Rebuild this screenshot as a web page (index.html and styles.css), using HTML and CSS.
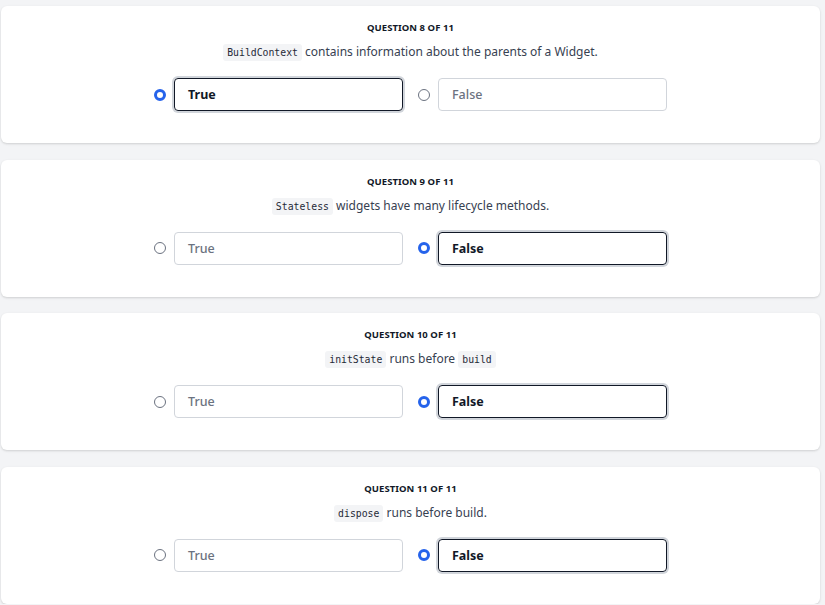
FILE: index.html
```html
<!DOCTYPE html>
<html>
<head>
<meta charset="utf-8">
<link rel="stylesheet" href="styles.css">
</head>
<body>
<main class="list">
  <section class="card">
    <div class="title">QUESTION 8 OF 11</div>
    <div class="question"><code>BuildContext</code> contains information about the parents of a Widget.</div>
    <div class="options">
      <label class="option selected"><span class="radio"></span><span class="box">True</span></label>
      <label class="option"><span class="radio"></span><span class="box">False</span></label>
    </div>
  </section>
  <section class="card">
    <div class="title">QUESTION 9 OF 11</div>
    <div class="question"><code>Stateless</code> widgets have many lifecycle methods.</div>
    <div class="options">
      <label class="option"><span class="radio"></span><span class="box">True</span></label>
      <label class="option selected"><span class="radio"></span><span class="box">False</span></label>
    </div>
  </section>
  <section class="card">
    <div class="title">QUESTION 10 OF 11</div>
    <div class="question"><code>initState</code> runs before <code>build</code></div>
    <div class="options">
      <label class="option"><span class="radio"></span><span class="box">True</span></label>
      <label class="option selected"><span class="radio"></span><span class="box">False</span></label>
    </div>
  </section>
  <section class="card">
    <div class="title">QUESTION 11 OF 11</div>
    <div class="question"><code>dispose</code> runs before build.</div>
    <div class="options">
      <label class="option"><span class="radio"></span><span class="box">True</span></label>
      <label class="option selected"><span class="radio"></span><span class="box">False</span></label>
    </div>
  </section>
</main>
</body>
</html>
```
FILE: styles.css
```css
html, body {
  margin: 0;
  padding: 0;
  background: #f3f4f6;
}
body {
  font-family: "Noto Sans", "Open Sans", sans-serif;
  color: #1f2937;
}
.list {
  display: flex;
  flex-direction: column;
  gap: 16.5px;
  padding: 6px 5px 0 1px;
}
.card {
  background: #ffffff;
  border-radius: 6px;
  box-shadow: 0 1px 3px rgba(0,0,0,0.10), 0 1px 2px rgba(0,0,0,0.06);
  height: 137px;
  box-sizing: border-box;
  padding-top: 16px;
  display: flex;
  flex-direction: column;
  align-items: center;
}
.title {
  font-size: 9.5px;
  font-weight: 700;
  line-height: 12px;
  color: #111827;
  letter-spacing: 0.05px;
}
.question {
  margin-top: 7px;
  font-size: 12px;
  line-height: 22px;
  color: #374151;
}
code {
  font-family: "DejaVu Sans Mono", "Liberation Mono", monospace;
  font-size: 9.8px;
  background: #f3f4f6;
  color: #1f2937;
  border-radius: 3px;
  padding: 3px 4px;
  letter-spacing: 0;
}
.options {
  margin-top: 14px;
  display: flex;
  gap: 15px;
}
.option {
  display: flex;
  align-items: center;
  gap: 8px;
}
.radio {
  width: 12px;
  height: 12px;
  box-sizing: border-box;
  border-radius: 50%;
  border: 1px solid #6b7280;
  background: #fff;
}
.box {
  width: 229px;
  height: 33px;
  box-sizing: border-box;
  border: 1px solid #d1d5db;
  border-radius: 4px;
  display: flex;
  align-items: center;
  padding-left: 13px;
  font-size: 12.5px;
  font-weight: 500;
  color: #6b7280;
}
.selected .radio {
  border: 3.5px solid #2563eb;
}
.selected .box {
  border: 1.5px solid #111827;
  box-shadow: 0 0 0 2px #d1d5db;
  color: #111827;
  font-weight: 700;
}
```
